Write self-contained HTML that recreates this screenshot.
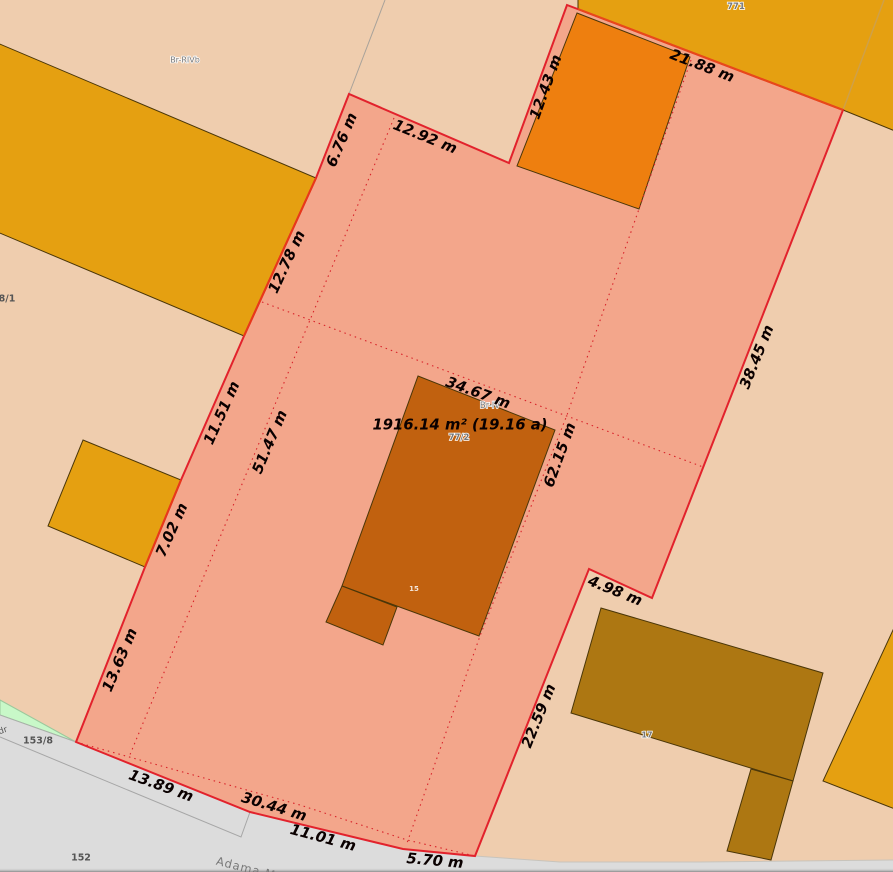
<!DOCTYPE html>
<html><head><meta charset="utf-8"><style>
html,body{margin:0;padding:0;background:#efcdae;overflow:hidden}
svg{display:block;filter:blur(.35px)}
.m{font:italic bold 14.8px "DejaVu Sans",sans-serif;fill:#0a0000;text-anchor:middle;dominant-baseline:central}
.s{font:7.5px "DejaVu Sans",sans-serif;text-anchor:middle;dominant-baseline:central;fill:#777;stroke:#fff;stroke-width:1.5px;paint-order:stroke}
.d{font:bold 8.5px "DejaVu Sans",sans-serif;text-anchor:middle;dominant-baseline:central;fill:#555}
.b{stroke:#4a3608;stroke-width:1}
</style></head><body>
<svg width="893" height="872" viewBox="0 0 893 872" xmlns="http://www.w3.org/2000/svg">
<defs><linearGradient id="g" x1="0" y1="0" x2="0" y2="1"><stop offset="0" stop-color="#dcdcdc" stop-opacity="0"/><stop offset="1" stop-color="#8a8a8a"/></linearGradient></defs>
<rect width="893" height="872" fill="#efcdae"/>
<polygon points="0,700 76,742 0,715" fill="#c8f8c8" stroke="#9cc89c" stroke-width="1"/>
<polygon points="0,715 76,742 250,812 403,849 475,856 560,862 700,862 893,860 893,872 0,872" fill="#dcdcdc"/>
<polyline points="475,856 560,862 700,862 893,860" fill="none" stroke="#c8c4bc" stroke-width="1"/>
<polyline points="0,715 76,742" fill="none" stroke="#a8b0a8" stroke-width="1"/>
<polyline points="0,737 241,837 250,812" fill="none" stroke="#a6a6a6" stroke-width="1"/>
<line x1="385" y1="0" x2="349" y2="94" stroke="#a8a29a" stroke-width="1"/>
<rect y="868" width="893" height="4" fill="url(#g)"/>

<polygon class="b" points="-5,42 316,178 244,336 -5,231" fill="#e5a011"/>
<polygon class="b" points="83,440 181,480 145,567 48,526" fill="#e5a011"/>
<polygon class="b" points="900,615 823,781 900,811" fill="#e5a011"/>
<polygon class="b" points="578,-5 900,-5 900,133 843,110 578,9" fill="#e5a011"/>
<line x1="884" y1="0" x2="843" y2="110" stroke="#cfa048" stroke-width="1.5"/>

<polygon points="76,742 145,567 181,480 244,336 316,178 349,94 509,163 567,5 843,110 652,598 589,569 475,856 403,849 250,812" fill="#f3a68b"/>

<polygon class="b" points="577,13 690,57 639,209 517,166" fill="#ee7f0f"/>
<polygon class="b" points="418,376 555,430 479,636 342,586" fill="#c1610f"/>
<polygon class="b" points="342,586 397,607 383,645 326,622" fill="#c1610f"/>
<polygon class="b" points="601,608 823,673 793,781 571,713" fill="#ad7712"/>
<polygon class="b" points="751,769 793,781 771,860 727,851" fill="#ad7712"/>

<g fill="none" stroke="#d8232a" stroke-width="1.1" stroke-dasharray="1.5 4">
<line x1="262" y1="302" x2="703" y2="467"/>
<polyline points="394,118 310,320 129,757"/>
<polyline points="691,60 639,209 567,415 480,636 407,843"/>
<polyline points="76,742 300,805 407,840 475,856"/>
</g>
<polygon points="76,742 145,567 181,480 244,336 316,178 349,94 509,163 567,5 843,110 652,598 589,569 475,856 403,849 250,812" fill="none" stroke="#e2222c" stroke-width="2"/>
<polyline points="578,9 843,110" fill="none" stroke="#e8481a" stroke-width="2"/>
<polyline points="316,178 244,336" fill="none" stroke="#e8381a" stroke-width="2"/>
<polyline points="181,480 145,567" fill="none" stroke="#e8381a" stroke-width="2"/>

<text class="s" x="185" y="60" style="font-size:8px">Br-RIVb</text>
<text class="s" x="736" y="7" style="font-weight:bold;font-size:8.5px">771</text>
<text class="s" x="490" y="406" style="font-size:8.5px">Br-IV</text>
<text class="s" x="459" y="438" style="font-weight:bold;font-size:8.5px">77/2</text>
<text class="s" x="414" y="589" style="font-weight:bold;font-size:7px;stroke:none;fill:#f4e6da">15</text>
<text class="s" x="647" y="735" style="font-weight:bold;font-size:8px">17</text>
<text class="d" x="7" y="299" style="font-size:9.5px">8/1</text>
<text class="d" x="38" y="741" style="font-size:9.5px">153/8</text>
<text class="d" x="81" y="858" style="font-size:9.5px">152</text>
<text class="d" x="3" y="731" transform="rotate(-20 3 731)" style="font-weight:normal">dr</text>
<text class="d" x="246" y="868" transform="rotate(14 246 868)" style="font-size:11.5px;font-weight:normal;fill:#777;letter-spacing:1px">Adama M</text>

<text class="m" transform="translate(342,140) rotate(-67)">6.76 m</text>
<text class="m" transform="translate(425,137) rotate(22)">12.92 m</text>
<text class="m" transform="translate(546,87) rotate(-70)">12.43 m</text>
<text class="m" transform="translate(702,66) rotate(21)">21.88 m</text>
<text class="m" transform="translate(287,262) rotate(-65)">12.78 m</text>
<text class="m" transform="translate(222,413) rotate(-66)">11.51 m</text>
<text class="m" transform="translate(270,442) rotate(-67)">51.47 m</text>
<text class="m" transform="translate(172,530) rotate(-66)">7.02 m</text>
<text class="m" transform="translate(120,660) rotate(-67)">13.63 m</text>
<text class="m" transform="translate(478,393) rotate(20)">34.67 m</text>
<text class="m" x="460" y="425">1916.14 m² (19.16 a)</text>
<text class="m" transform="translate(560,455) rotate(-70)">62.15 m</text>
<text class="m" transform="translate(757,357) rotate(-68)">38.45 m</text>
<text class="m" transform="translate(615,591) rotate(22)">4.98 m</text>
<text class="m" transform="translate(539,716) rotate(-68)">22.59 m</text>
<text class="m" transform="translate(161,786) rotate(20)">13.89 m</text>
<text class="m" transform="translate(274,807) rotate(17)">30.44 m</text>
<text class="m" transform="translate(323,838) rotate(15)">11.01 m</text>
<text class="m" transform="translate(435,861) rotate(5)">5.70 m</text>
</svg>
</body></html>
